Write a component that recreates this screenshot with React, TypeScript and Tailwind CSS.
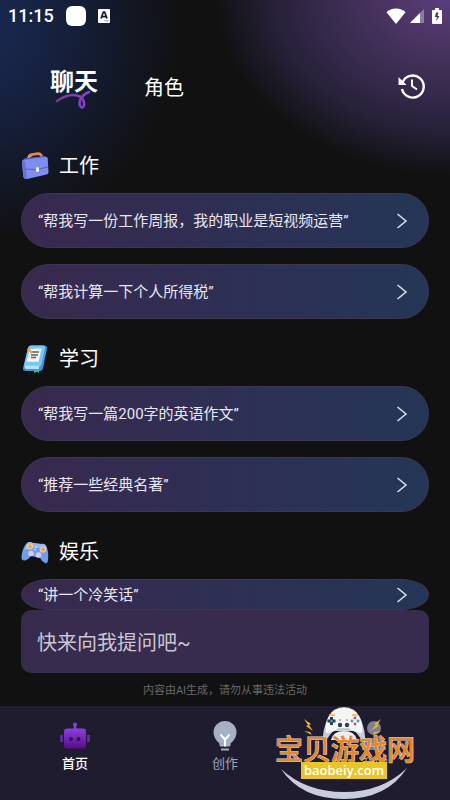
import React from "react";
import clsx from "clsx";

function StatusBar() {
  return (
    <div className="flex h-8 items-center px-2 text-white">
      <span className="text-lg font-medium leading-8">11:15</span>
      <span className="ml-3 h-5 w-5 rounded-md bg-white" />
      <svg className="ml-3 h-3.5 w-3" viewBox="0 0 12 14">
        <rect width="12" height="14" rx="1" fill="#fff" />
        <path d="M3 9.5 5.4 3h1.2L9 9.5M4 7.6h4" fill="none" stroke="#181c2c" strokeWidth="1.7" />
        <path d="M6.500 11.800h4" stroke="#8b8e98" strokeWidth="1" />
      </svg>
      <svg className="ml-auto h-4 w-5" viewBox="0 0 20 16">
        <path d="M10 16 .5 4.200C3 1.800 6.300.5 10 .5s7 1.300 9.500 3.700z" fill="#fff" />
      </svg>
      <svg className="ml-1 h-3.5 w-3.5" viewBox="0 0 14 14">
        <path d="M14 0v14H0z" fill="#8d7ba6" />
        <path d="M10 4v10H0z" fill="#fff" />
      </svg>
      <svg className="ml-2 h-4 w-2.5" viewBox="0 0 10 16">
        <path d="M3 0h4v2h2q1 0 1 1v12q0 1-1 1H1q-1 0-1-1V3q0-1 1-1h2z" fill="#fff" />
        <path d="M6.500 4.500H4.200L2.800 9h2.100l-.7 4.200L7.500 8H5.500z" fill="#4b3568" />
      </svg>
    </div>
  );
}

function BriefcaseIcon() {
  return (
    <svg className="h-7 w-7" viewBox="0 0 28 28">
      <path d="M6.500 8 8 4.500l3-1.500" fill="none" stroke="#e9d3dd" strokeWidth="2" />
      <path d="M8 4.500Q8.500 3 10.500 2.600l6.500-1q2-.2 3 1.400L21.500 6" fill="none" stroke="#e98253" strokeWidth="2.800" />
      <path d="m1 8.500 3-2.500L24 4l3 2-1 4z" fill="#5258b6" />
      <path d="M1 10q0-2 2-2.300l21-2.700q2.500-.2 2.700 2L27.500 20q0 2.300-2 2.600L6 27q-3 .3-3.600-2.200z" fill="#7f8df0" />
      <path d="m1 10 1.200 14.500Q2.700 27 6 27L4 9z" fill="#6a70d6" />
      <path d="m4 17 12 .5L27 15" fill="none" stroke="#5660c4" strokeWidth="1" />
      <rect x="15" y="15" width="3" height="5" rx="1.500" fill="#f5efff" />
    </svg>
  );
}

function NotebookIcon() {
  return (
    <svg className="h-7 w-7" viewBox="0 0 28 28">
      <path d="M7 3q.5-2.500 3-2.500h13q3.500 0 3 3l-4 19.500q-.5 3-3.500 3H5q-3.500 0-3-3z" fill="#4295df" />
      <path d="M7 3q.5-2.500 3-2.500h12q2.500 0 2 3l-4 17H3z" fill="#78c9f6" />
      <path d="M3.500 20.500h15.500q-1.500 1.500-1 3.500H5.500q-2.500-.5-2-3.500" fill="#b9e2fb" />
      <path d="m9 4 11.500-.5-3 13.500q-3-1-5 0l-7-.5z" fill="#f7f3ee" />
      <path d="M11 7h7m-8 3h7m-7 2.500h5" stroke="#5b6472" strokeWidth="1.400" />
      <path d="m7 3.500 4 4.500" stroke="#f0a43c" strokeWidth="2.500" />
      <path d="M13 24.500h5V28l-2-1.200L13 28z" fill="#39b9ab" />
    </svg>
  );
}

function GamepadIcon() {
  return (
    <svg className="h-7 w-7" viewBox="0 0 28 28">
      <path d="M6 5q3-2 6 0l8 1q3-1 5 1.500Q28 13 27 22q-.5 4-3 3-3-1-5-5l-9-2q-3 4-6 4.500-4 .2-3.500-4Q1.500 9 6 5" fill="#729bea" />
      <path d="M6 5q3-2 6 0l8 1q3-1 5 1.500L26 12Q15 7 3 12z" fill="#93b8f5" />
      <circle cx="9" cy="8.500" r="3.300" fill="#edc58b" />
      <circle cx="22" cy="11.500" r="3.300" fill="#edc58b" />
      <path d="M9 6.500v4M7 8.500h4m9 3h4m-2-2v4" stroke="#d4a064" strokeWidth="1" />
      <circle cx="10" cy="15.500" r="2.800" fill="#cdcdfa" />
      <circle cx="17.500" cy="17" r="2.800" fill="#cdcdfa" />
      <path d="m14 9 2 .5m-3 2 2 .5" stroke="#dbe7ff" strokeWidth="1" />
    </svg>
  );
}

function RobotIcon() {
  return (
    <svg className="h-7 w-8" viewBox="0 0 32 28">
      <defs>
        <linearGradient id="robot" x1="0" y1="0" x2="0" y2="1">
          <stop offset="0" stopColor="#8b3fe0" />
          <stop offset="1" stopColor="#5b0c86" />
        </linearGradient>
      </defs>
      <path d="M16 2v5" stroke="#8444d6" strokeWidth="2.500" />
      <circle cx="16" cy="2.500" r="2" fill="#8444d6" />
      <rect x="5" y="6.500" width="22" height="20" rx="3" fill="url(#robot)" />
      <path d="M2.500 13v7m27-7v7" stroke="#682da8" strokeWidth="2.600" />
      <circle cx="12" cy="17" r="1.900" fill="#221b33" />
      <circle cx="19.500" cy="17" r="1.900" fill="#221b33" />
    </svg>
  );
}

function BulbIcon() {
  return (
    <svg className="h-8 w-8" viewBox="0 0 32 32">
      <path d="M16 1a11.500 11.500 0 0 0-11.500 11.500q0 6 6 11V25q0 1.500 1.500 1.500h8q1.500 0 1.500-1.500v-1.500q6-5 6-11A11.500 11.500 0 0 0 16 1" fill="#a7afc5" />
      <path d="m11.500 14.500 4.500 5 4.500-5M16 19v7.500" fill="none" stroke="#fff" strokeWidth="2" />
      <path d="M12 29.500h8" stroke="#a7afc5" strokeWidth="2" />
    </svg>
  );
}

function PersonIcon() {
  return (
    <svg className="h-8 w-8" viewBox="0 0 32 32">
      <circle cx="15" cy="8" r="7" fill="#7a8197" />
      <path d="M3 30q0-12 12-12t12 12z" fill="#777f96" />
    </svg>
  );
}

const sections = [
  {
    title: "工作",
    icon: <BriefcaseIcon />,
    prompts: ["“帮我写一份工作周报，我的职业是短视频运营”", "“帮我计算一下个人所得税”"],
  },
  {
    title: "学习",
    icon: <NotebookIcon />,
    prompts: ["“帮我写一篇200字的英语作文”", "“推荐一些经典名著”"],
  },
  {
    title: "娱乐",
    icon: <GamepadIcon />,
    prompts: ["“讲一个冷笑话”"],
    compact: true,
  },
];

const navItems = [
  { label: "首页", icon: <RobotIcon />, active: true },
  { label: "创作", icon: <BulbIcon />, active: false },
  { label: "我的", icon: <PersonIcon />, active: false },
];

function PromptButton({ text, compact }: { text: string; compact?: boolean }) {
  return (
    <button
      className={clsx(
        "flex w-full items-center justify-between border border-[#3b3850] bg-linear-to-r from-[#39294e] via-[#2e2f54] to-[#243657] pl-4 pr-5 text-left text-[15px] text-[#e9e6f2]",
        compact ? "h-[31px] rounded-[28px/50%]" : "h-[55px] rounded-full"
      )}
    >
      <span className="pt-0.5">{text}</span>
      <svg className="h-4 w-3" viewBox="0 0 12 16">
        <path d="m1.500 1 8.500 7-8.500 7" fill="none" stroke="#dfe1ed" strokeWidth="1.500" />
      </svg>
    </button>
  );
}

function SiteBadge() {
  return (
    <div className="pointer-events-none absolute right-[33px] bottom-0 h-24 w-36">
      <svg className="absolute inset-0 h-24 w-36" viewBox="0 0 144 96">
        <path d="M8 65q25 23 63 23t63-24q-20 31-63 31T8 65" fill="#c9ccdb" />
        <path d="M50 40q-1-14 5-26Q60 3 71 3t16 11q6 12 5 26L82 27H60z" fill="#c9cbd5" />
        <path d="M53 29q-2-13 6-21 5-4 12-4t12 4q8 8 6 21-8 0-13-5H65q-4 5-12 5" fill="#f5f5f6" />
        <path d="M58 36q2-9 13-9t13 9z" fill="#eeeeef" />
        <path d="M56 11h6m17 0h6" stroke="#edb32e" strokeWidth="1.500" />
        <path d="M58.500 13v8m-4-4h8" stroke="#25434e" strokeWidth="3" />
        <circle cx="58.500" cy="17" r="1" fill="#6fc2c9" />
        <circle cx="82" cy="14" r="1.400" fill="#df4264" />
        <circle cx="82" cy="20" r="1.400" fill="#df4264" />
        <circle cx="79" cy="17" r="1.400" fill="#3a9faf" />
        <circle cx="85" cy="17" r="1.400" fill="#3a9faf" />
        <circle cx="67" cy="21" r="2.200" fill="#25434e" />
        <circle cx="74" cy="21" r="2.200" fill="#25434e" />
        <path d="M66 16h2m5 0h2" stroke="#df4264" strokeWidth="1" />
        <path d="m31 15 7 5-2 1 4 6-7-5 2-1zm0 12 6 1 2 3zM108 15l-7 5 2 1-6 6 9-5-2-1zm0 12-7 1-1 3z" fill="#f2b32b" />
      </svg>
      <div className="absolute inset-x-0 top-[27px] text-center text-[28px] font-medium leading-10 text-[#e9871f] [-webkit-text-stroke:1px_#dcd6dc] [paint-order:stroke_fill] whitespace-nowrap">
        宝贝游戏网
      </div>
      <div className="absolute left-7 top-[58px] flex h-[17px] w-[86px] items-center justify-center bg-[#e8c52b] pb-0.5 font-['Open_Sans'] text-[13px] leading-4 font-semibold text-white">
        baobeiy.com
      </div>
    </div>
  );
}

export default function App() {
  return (
    <div className="flex min-h-screen flex-col bg-[#111112] bg-[radial-gradient(ellipse_235px_180px_at_100%_-5px,#5a3f80_0%,#49335f_30%,#352a4c_55%,#272139_75%,transparent_100%),radial-gradient(ellipse_200px_210px_at_-20px_30px,#1a2952_0%,#172344_30%,#141b30_60%,transparent_100%)] bg-no-repeat font-[Roboto,'Noto_Sans_CJK_SC',sans-serif] text-white">
      <StatusBar />

      <header className="flex h-[110px] items-start pl-[50px] pr-6 pt-[34px]">
        <button className="relative text-2xl font-bold leading-8">
          聊天
          <svg className="absolute left-1 top-6 h-6 w-9" viewBox="0 0 36 24">
            <defs>
              <linearGradient id="swirl">
                <stop stopColor="#784078" />
                <stop offset="1" stopColor="#863edb" />
              </linearGradient>
            </defs>
            <path
              d="M3 11Q16 2 26 6.500c5 3 5 11 2 11-4-1-4-11 7-15.500"
              fill="none"
              stroke="url(#swirl)"
              strokeWidth="2.600"
              strokeLinecap="round"
            />
          </svg>
        </button>
        <button className="ml-[46px] mt-1.5 text-xl leading-8">角色</button>
        <button className="ml-auto mt-1.5" aria-label="history">
          <svg className="h-7 w-7" viewBox="0 0 28 28" fill="none" stroke="#fff" strokeWidth="2.400">
            <path d="M4.500 10.500A11 11 0 1 1 4 17" />
            <path d="M14 7.500v6.500l5 3.500" strokeWidth="2" />
            <path d="M.500 5v8H8.500z" fill="#fff" stroke="none" />
          </svg>
        </button>
      </header>

      <main className="flex-1 px-[21px]">
        {sections.map((section) => (
          <section key={section.title} className={section.compact ? "" : "mb-4"}>
            <h2 className="flex h-[51px] items-start gap-2.5 pt-2 text-xl font-normal leading-8">
              <span className="mt-0.5">{section.icon}</span>
              {section.title}
            </h2>
            <div className="flex flex-col gap-4">
              {section.prompts.map((prompt) => (
                <PromptButton key={prompt} text={prompt} compact={section.compact} />
              ))}
            </div>
          </section>
        ))}
        <input
          className="block h-[63px] w-full rounded-[10px] bg-[#372b4e] px-4 pt-0.5 text-xl text-white outline-none placeholder:text-[#cbc6d1]"
          placeholder="快来向我提问吧~"
          aria-label="快来向我提问吧~"
        />
        <p className="pt-2 text-center text-[11px] leading-5 text-[#68686b]">内容由AI生成，请勿从事违法活动</p>
      </main>

      <nav className="relative grid h-[94px] grid-cols-3 bg-[#201c2f]">
        {navItems.map((item) => (
          <button
            key={item.label}
            className={clsx(
              "flex flex-col items-center pt-3 text-[13px] leading-5",
              item.active ? "font-medium text-white" : "text-[#a0a5b9]"
            )}
          >
            <span className="flex h-9 items-center">{item.icon}</span>
            {item.label}
          </button>
        ))}
        <SiteBadge />
      </nav>
    </div>
  );
}
